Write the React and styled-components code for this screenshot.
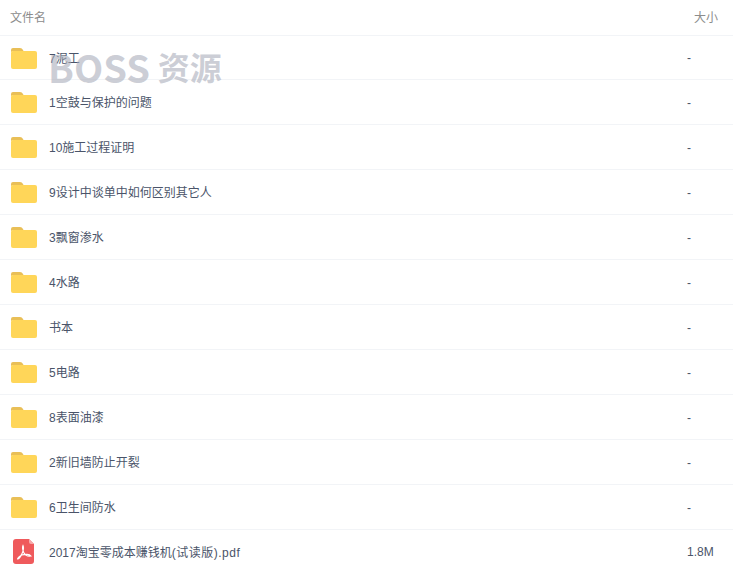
import styled, { createGlobalStyle } from 'styled-components';

const GlobalStyle = createGlobalStyle`
  html, body {
    margin: 0;
    padding: 0;
    background: #fff;
    overflow: hidden;
  }
`;

const Page = styled.div`
  position: relative;
  width: 733px;
  height: 571px;
  overflow: hidden;
  font-family: "Liberation Sans", "Noto Sans CJK SC", sans-serif;
  font-size: 12px;
  color: #4a5469;
`;

const Header = styled.div`
  height: 36px;
  display: flex;
  align-items: center;
  justify-content: space-between;
  padding: 0 15px 3px 10px;
  box-sizing: border-box;
  border-bottom: 1px solid #f2f4f7;
  color: #8c8c8c;
`;

const Row = styled.div`
  height: ${(p) => (p.$first ? 44 : 45)}px;
  box-sizing: border-box;
  display: flex;
  align-items: center;
  padding-bottom: ${(p) => (p.$first ? 0 : 1)}px;
  border-bottom: 1px solid #f2f4f7;
`;

const IconCell = styled.div`
  width: 49px;
  flex: none;
  display: flex;
  padding-left: ${(p) => (p.$pdf ? 13 : 11)}px;
  box-sizing: border-box;
`;

const Name = styled.div`
  flex: 1;
`;

const WideTail = styled.span`
  letter-spacing: 0.5px;
`;

const Size = styled.div`
  width: 46px;
  flex: none;
`;

const EmptySize = styled(Size)`
  padding-top: ${(p) => (p.$first ? 0 : 2)}px;
`;

const Watermark = styled.div`
  position: absolute;
  left: 48px;
  top: 42px;
  display: flex;
  align-items: center;
  gap: 8px;
  height: 48px;
  font-family: "Noto Sans CJK SC", "Liberation Sans", sans-serif;
  font-weight: 700;
  color: rgba(170, 174, 186, 0.6);
  white-space: nowrap;
`;

const WatermarkLatin = styled.span`
  font-size: 38px;
`;

const WatermarkCjk = styled.span`
  font-size: 32px;
`;

const FolderIcon = () => (
  <svg width="26" height="22" viewBox="0 0 26 22">
    <path d="M0 3 Q0 1 2 1 H9 Q11 1 12 3 L12.5 4 H3 Q0 4 0 6 Z" fill="#e9bf57" />
    <path d="M0 6 Q0 4 2 4 H24 Q26 4 26 6 V20 Q26 22 24 22 H2 Q0 22 0 20 Z" fill="#ffd659" />
  </svg>
);

const PdfIcon = () => (
  <svg width="21" height="25" viewBox="0 0 21 25">
    <path d="M3 0 H16 L21 5 V22 Q21 25 18 25 H3 Q0 25 0 22 V3 Q0 0 3 0 Z" fill="#ef5a5c" />
    <path d="M16 0 L21 5 H18 Q16 5 16 3 Z" fill="#f7a9aa" />
    <path
      d="M10 6.5 C9 8.5 10 12 11 14 C12 16 15 17.5 18 17 C16.5 15 12 15 9 16 C7 16.5 4.5 19 4.5 20 C6 20 8.5 16 9.5 13.5 C10.5 11 11 8.5 10 6.5 Z"
      fill="none"
      stroke="#fff"
      strokeWidth="1.1"
    />
  </svg>
);

const folders = [
  '7泥工',
  '1空鼓与保护的问题',
  '10施工过程证明',
  '9设计中谈单中如何区别其它人',
  '3飘窗渗水',
  '4水路',
  '书本',
  '5电路',
  '8表面油漆',
  '2新旧墙防止开裂',
  '6卫生间防水',
];

export default function App() {
  return (
    <Page>
      <GlobalStyle />
      <Header>
        <span>文件名</span>
        <span>大小</span>
      </Header>
      {folders.map((name, i) => (
        <Row key={name} $first={i === 0}>
          <IconCell>
            <FolderIcon />
          </IconCell>
          <Name>{name}</Name>
          <EmptySize $first={i === 0}>-</EmptySize>
        </Row>
      ))}
      <Row>
        <IconCell $pdf>
          <PdfIcon />
        </IconCell>
        <Name>
          2017淘宝零成本赚钱机<WideTail>(试读版).pdf</WideTail>
        </Name>
        <Size>1.8M</Size>
      </Row>
      <Watermark>
        <WatermarkLatin>BOSS</WatermarkLatin>
        <WatermarkCjk>资源</WatermarkCjk>
      </Watermark>
    </Page>
  );
}
